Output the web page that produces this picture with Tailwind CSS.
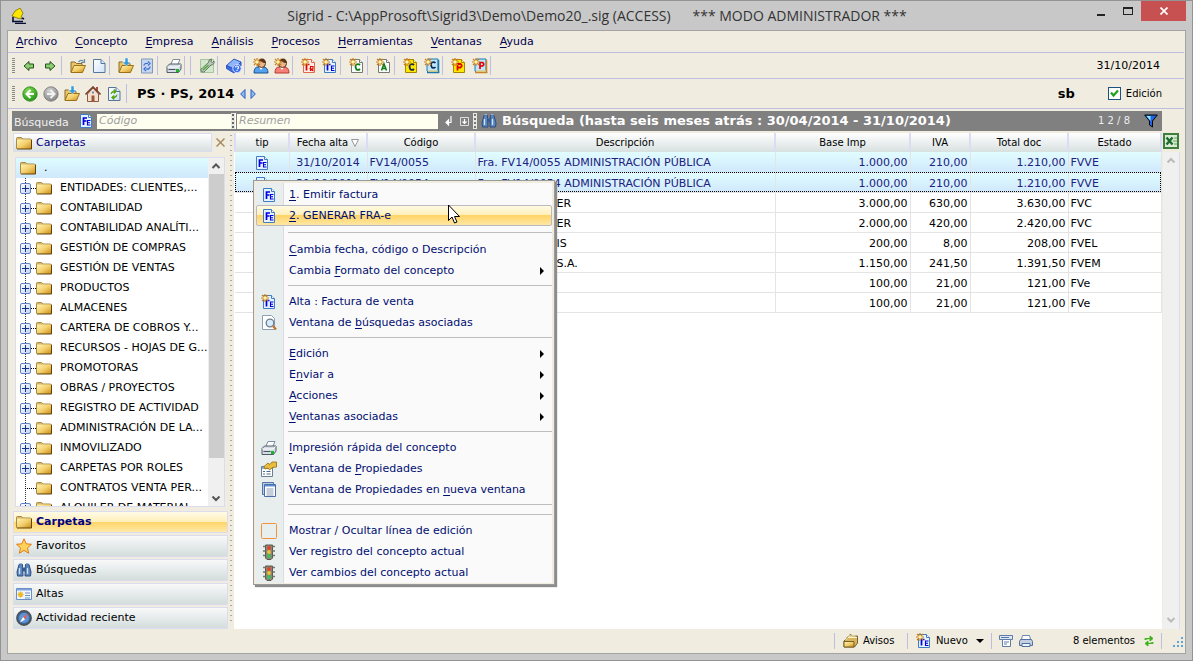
<!DOCTYPE html>
<html lang="es">
<head>
<meta charset="utf-8">
<title>Sigrid</title>
<script src="https://cdn.jsdelivr.net/npm/@tailwindcss/browser@4"></script>
</head>
<body class="h-screen overflow-hidden font-['DejaVu_Sans',sans-serif] text-[11px] leading-4 text-black">

<svg class="absolute size-0" aria-hidden="true">
  <defs>
    <linearGradient id="gold" x1="0" y1="0" x2="1" y2="1"><stop offset="0" stop-color="#fff3b0"/><stop offset=".5" stop-color="#f3cf6c"/><stop offset="1" stop-color="#c98a12"/></linearGradient>
    <linearGradient id="sheet" x1="0" y1="0" x2="1" y2="1"><stop offset="0" stop-color="#fff"/><stop offset="1" stop-color="#cfe2f8"/></linearGradient>
    <radialGradient id="greenBall" cx=".4" cy=".3" r=".8"><stop offset="0" stop-color="#8be05a"/><stop offset="1" stop-color="#128a0c"/></radialGradient>
    <radialGradient id="grayBall" cx=".4" cy=".3" r=".8"><stop offset="0" stop-color="#d4d4d4"/><stop offset="1" stop-color="#7b7b7b"/></radialGradient>
  </defs>
  <symbol id="folder" viewBox="0 0 16 16"><path d="M.5 3.5q0-1 1-1h4l1.500 1.500h7.500v9.500H.5z" fill="#d9b768" stroke="#a88a4a"/><path d="M1 4.500h14.500v9.500H1z" fill="url(#gold)"/><path d="M15.500 4.500V14H1" fill="none" stroke="#5e430f"/></symbol>
  <symbol id="openFolder" viewBox="0 0 16 16"><path d="M1 14V4h4l1.500 1.500H12V8" fill="#e9c66a" stroke="#8b6b2a"/><path d="M1 14.500 4 7.500h11.500L12.500 14.500z" fill="url(#gold)" stroke="#9a7018"/></symbol>
  <symbol id="folderOut" viewBox="0 0 16 16"><use href="#openFolder"/><path d="M8.500 4q2.500-3 5-.5M14.500 1v3.500H11" fill="none" stroke="#6f8fae" stroke-width="1.200"/></symbol>
  <symbol id="folderIn" viewBox="0 0 16 16"><use href="#openFolder"/><path d="M7 0h3v4h2.500L8.500 8 4.500 4H7z" fill="#2f9be0" stroke="#fff" stroke-width=".5"/></symbol>
  <symbol id="page" viewBox="0 0 16 16"><path d="M2.500 1.500h7.500l4 4v9H2.500z" fill="url(#sheet)" stroke="#56779d"/><path d="M10 1.500v4h4" fill="#dbe9f9" stroke="#56779d"/></symbol>
  <symbol id="pageSync" viewBox="0 0 16 16"><path d="M2.500 1h11v14h-11z" fill="#c6d6ee" stroke="#8197b8"/><path d="M5 7.500q0-2.500 4-2M9 3.500l2 2-2 2M11 8.500q0 3-4 2.500M7 13l-2-2 2-2" fill="none" stroke="#3f6dd0" stroke-width="1.200"/></symbol>
  <symbol id="pageRenew" viewBox="0 0 16 16"><use href="#page"/><path d="M5 8q0-3 3.500-2.500M8 3.500l2.500 2-2.500 2zM11 8.500q0 3.500-3.500 3M8 13.500l-2.500-2 2.500-2z" fill="#59a60e" stroke="#59a60e"/></symbol>
  <symbol id="printer" viewBox="0 0 16 16"><path d="M5 6 7 1.500h7L12 6" fill="#fff" stroke="#7d8da0"/><path d="M1 8.500 3.500 6H15v5l-2.500 3.500H1z" fill="#d5dbe2" stroke="#4f5c6b"/><path d="M1.500 9H12l2.500-2.500" fill="none" stroke="#fff"/><path d="M2.500 11.500h7" stroke="#49525e"/><path d="M10 11h3v3h-3z" fill="#18b52c"/></symbol>
  <symbol id="wrench" viewBox="0 0 16 16"><path d="M1.500 1.500h13v13h-13z" fill="#d3e6ce" stroke="#a8c3a1"/><path d="M2.500 13.500q-2-2.500 1-3.500l6-5.500q0-3.500 3-3.500l-.5 2.500 1.500 1 1.500-1.500q1 3.500-3 4L6.500 12.500q-1.500 3-4 1z" fill="#b9c7b8" stroke="#5f7b5c"/><path d="m4 12 5.500-5" stroke="#4fae3a" stroke-width="1.500"/></symbol>
  <symbol id="helpBook" viewBox="0 0 16 16"><path d="M.5 7.500 8 1l7 3-7 7z" fill="#8fb4fa" stroke="#2c55c0"/><path d="M.5 7.500v3L8 15l7-7V4l-7 7z" fill="#3d6be0" stroke="#2c55c0"/><circle cx="11" cy="10.500" r="4.200" fill="#3f70ee" stroke="#cfe0ff"/><path d="M9.500 9.500q0-1.500 1.500-1.500t1.500 1.500-1.500 1.500M11 12v1" fill="none" stroke="#fff" stroke-width="1.200"/></symbol>
  <symbol id="spark" viewBox="0 0 16 16"><path d="M4 0v8M0 4h8M1 1l6 6M7 1 1 7" stroke="#c87c1a" stroke-width="1.200"/><circle cx="4" cy="4" r="1.800" fill="#fff6b0"/></symbol>
  <symbol id="userBlue" viewBox="0 0 16 16"><path d="M1 15q0-6 4-6h5q5 0 5 6z" fill="#57a2f0" stroke="#19508e"/><path d="M6 9h4l-2 3z" fill="#fff"/><circle cx="8.500" cy="5.500" r="4" fill="#e9b487" stroke="#5d3519"/><path d="M4.500 4q1-3.500 4.500-3.500T13 5q-4 0-5-2z" fill="#5d3519"/><use href="#spark"/></symbol>
  <symbol id="userRed" viewBox="0 0 16 16"><path d="M1 15q0-6 4-6h5q5 0 5 6z" fill="#f58078" stroke="#b83830"/><path d="M6 9h4l-2 3z" fill="#fff"/><circle cx="8.500" cy="5.500" r="4" fill="#e9b487" stroke="#5d3519"/><path d="M4.500 4q1-3.500 4.500-3.500T13 5q-4 0-5-2z" fill="#5d3519"/><use href="#spark"/></symbol>
  <symbol id="pageFE" viewBox="0 0 16 16"><path d="M2.500 1.500h8l3 3v10h-11z" fill="#e6f2ff" stroke="#3f7ec0"/><path d="M10.500 1.500v3h3" fill="#fff" stroke="#3f7ec0"/><path d="M5.500 12V5h3.500M5.500 8h3" fill="none" stroke="#0000e0" stroke-width="1.700"/><path d="M12.500 7.500H9.500V12h3M9.500 9.800h2.500" fill="none" stroke="#0000e0" stroke-width="1.100"/></symbol>
  <symbol id="newFE" viewBox="0 0 16 16"><path d="M2.500 1.500h8l3 3v10h-11z" fill="#e6f2ff" stroke="#3f7ec0"/><path d="M10.500 1.500v3h3" fill="#fff" stroke="#3f7ec0"/><path d="M5.500 12.500V6.500h3" fill="none" stroke="#0000e0" stroke-width="1.700"/><path d="M12.500 8H9.500v4.500h3M9.500 10.300h2.500" fill="none" stroke="#0000e0" stroke-width="1.100"/><use href="#spark"/></symbol>
  <symbol id="newFR" viewBox="0 0 16 16"><path d="M2.500 1.500h8l3 3v10h-11z" fill="#ffece6" stroke="#e06a50"/><path d="M10.500 1.500v3h3" fill="#fff" stroke="#e06a50"/><path d="M5.500 12.500V6.500h3" fill="none" stroke="#e00000" stroke-width="1.700"/><path d="M9.500 13V8.500h2.500V11H9.500l3 2" fill="none" stroke="#e00000" stroke-width="1.100"/><use href="#spark"/></symbol>
  <symbol id="newC" viewBox="0 0 16 16"><path d="M2.500 1.500h8l3 3v10h-11z" fill="#fafdfa" stroke="#777"/><path d="M10.500 1.500v3h3" fill="#fff" stroke="#777"/><path d="M11 7Q9.500 5.500 7.500 6.500t0 5q2 1 3.500-.5" fill="none" stroke="#0b7d1b" stroke-width="1.800"/><use href="#spark"/></symbol>
  <symbol id="newA" viewBox="0 0 16 16"><path d="M2.500 1.500h8l3 3v10h-11z" fill="#fafdfa" stroke="#777"/><path d="M10.500 1.500v3h3" fill="#fff" stroke="#777"/><path d="M5.500 12.500 8 6l2.500 6.500M6.500 10.500h3" fill="none" stroke="#0b7d1b" stroke-width="1.600"/><use href="#spark"/></symbol>
  <symbol id="newCY" viewBox="0 0 16 16"><path d="M2.500 1.500h8l3 3v10h-11z" fill="#ffe800" stroke="#a98500"/><path d="M10.500 1.500v3h3" fill="#fff8b0" stroke="#a98500"/><path d="M11 7Q9.500 5.500 7.500 6.500t0 5q2 1 3.500-.5" fill="none" stroke="#1c2a4a" stroke-width="1.800"/><use href="#spark"/></symbol>
  <symbol id="newPY" viewBox="0 0 16 16"><path d="M2.500 1.500h8l3 3v10h-11z" fill="#ffe800" stroke="#a98500"/><path d="M10.500 1.500v3h3" fill="#fff8b0" stroke="#a98500"/><path d="M6.500 12.500V6h3q2.500 1.800 0 3.500h-3" fill="none" stroke="#e00000" stroke-width="1.800"/><use href="#spark"/></symbol>
  <symbol id="bookC" viewBox="0 0 16 16"><path d="M3 2.500 5 1h9v11l1 2.500H4.500L3 13z" fill="#bfe6fa" stroke="#1a78ae"/><path d="M14.500 2v12.500H3" fill="none" stroke="#1a78ae" stroke-width="1.500"/><path d="M4 13h10" stroke="#f2c24a"/><path d="M11.500 5Q10 3.500 8 4.500t0 5q2 1 3.500-.5" fill="none" stroke="#0f2d50" stroke-width="1.700"/><use href="#spark"/></symbol>
  <symbol id="bookP" viewBox="0 0 16 16"><path d="M3 2.500 5 1h9v11l1 2.500H4.500L3 13z" fill="#bfe6fa" stroke="#1a78ae"/><path d="M14.500 2v12.500H3" fill="none" stroke="#c8842a" stroke-width="1.500"/><path d="M4 13h10" stroke="#f2c24a"/><path d="M8 11V4.500h2.500q2.500 1.500 0 3.500H8" fill="none" stroke="#e00000" stroke-width="1.700"/><use href="#spark"/></symbol>
  <symbol id="arrowL" viewBox="0 0 16 16"><path d="M3 8 8 3.500v2.500h4.500v4H8v2.500z" fill="#8ccf72" stroke="#24501c"/></symbol>
  <symbol id="arrowR" viewBox="0 0 16 16"><path d="M13 8 8 3.500v2.500H3.500v4H8v2.500z" fill="#8ccf72" stroke="#24501c"/></symbol>
  <symbol id="ballL" viewBox="0 0 16 16"><circle cx="8" cy="8" r="7.200" fill="url(#greenBall)" stroke="#2c8a1d" stroke-width=".8"/><path d="M8.500 4 4.500 8l4 4M5 8h7" fill="none" stroke="#fff" stroke-width="2"/></symbol>
  <symbol id="ballR" viewBox="0 0 16 16"><circle cx="8" cy="8" r="7.200" fill="url(#grayBall)" stroke="#777" stroke-width=".8"/><path d="m7.500 4 4 4-4 4M11 8H4" fill="none" stroke="#f2f2f2" stroke-width="2"/></symbol>
  <symbol id="home" viewBox="0 0 16 16"><path d="M11 1h2v5h-2z" fill="#a55340"/><path d="M2.500 8v7.500h11V8L8 2z" fill="#f7dfcf" stroke="#8b5b44"/><path d="M.5 8.500 8 1l7.500 7.500" fill="none" stroke="#77422f" stroke-width="1.600"/><path d="M6.500 9.500h3v6h-3z" fill="#9b5a33"/><path d="M7 5.500h2v2H7z" fill="#6b90b8"/></symbol>
  <symbol id="star" viewBox="0 0 16 16"><path d="m8 .8 2.200 5 5.300.5-4 3.600 1.200 5.300L8 12.400l-4.700 2.800 1.200-5.300-4-3.600 5.300-.5z" fill="#ffd25a" stroke="#e07b1c"/></symbol>
  <symbol id="binoc" viewBox="0 0 16 16"><path d="M3 2.500h3.500v3L7 14H1.500L1 10zM9.500 2.500H13l2 7.500-.5 4H9z" fill="#5b85bd" stroke="#2c4d80"/><path d="M6.500 5.500h3v4h-3z" fill="#365d96"/><path d="M3.500 1h2.500v1.500H3.500zM10 1h2.500v1.500H10z" fill="#8fb2da"/><path d="M3.500 6v6M11.500 6v6" stroke="#cfe2f7" stroke-width="1.300"/></symbol>
  <symbol id="card" viewBox="0 0 16 16"><path d="M.5 2.500h15v11H.5z" fill="#eef5ff" stroke="#6a8fc4"/><path d="M1 3h14v1.500H1z" fill="#7fa5da"/><path d="M4.500 5.500v6M1.500 8.500h6M2.500 6.500l4 4M6.500 6.500l-4 4" stroke="#eebb22" stroke-width="1.300"/><path d="M9 7h5M9 9.500h5M9 12h5" stroke="#7291ba"/></symbol>
  <symbol id="compass" viewBox="0 0 16 16"><circle cx="8" cy="8" r="7" fill="#3c6ea8" stroke="#4c5258" stroke-width="1.800"/><circle cx="8" cy="8" r="5" fill="#5b95d8"/><path d="m12 3.500-3 6L7 7z" fill="#f25b4a"/><path d="m4 12.500 3-5.500 2 2.500z" fill="#fff"/></symbol>
  <symbol id="pageFind" viewBox="0 0 16 16"><path d="M1.500.5h9l3 3v11h-12z" fill="#fff" stroke="#8c9fb5"/><circle cx="9" cy="8" r="3.800" fill="#d6ebfb" stroke="#6b7b8c" stroke-width="1.300"/><path d="m12 11 3 3.500" stroke="#c27328" stroke-width="2.200"/></symbol>
  <symbol id="props" viewBox="0 0 16 16"><path d="M.5 5.500h11v10H.5z" fill="#fff" stroke="#6a7e96"/><path d="M1 6h10v2H1z" fill="#8cabd5"/><path d="M2 10.500h2M5.500 10.500h4M2 13h2M5.500 13h4" stroke="#48688e"/><path d="M3 5.500 7 2l2 1.500L11 1h4.500v5l-4 .5-3 2.500-1.500-2-3 1z" fill="#e9bd3b" stroke="#8f6d13" stroke-width=".8"/></symbol>
  <symbol id="windows" viewBox="0 0 16 16"><path d="M1.500.5h11v12h-11z" fill="#b9cbe4" stroke="#5275aa"/><path d="M3.500 2.500h11v12h-11z" fill="#fff" stroke="#4a6da6"/><path d="M4 3h10v1.500H4z" fill="#5f8ed1"/><path d="M5.500 7h7M5.500 9h7M5.500 11h7M5.500 13h7" stroke="#8b9cb5"/></symbol>
  <symbol id="traffic" viewBox="0 0 16 16"><path d="M4.500 1h7v13L10 15.500H6L4.500 14z" fill="#8d8674" stroke="#5c574b"/><path d="M2 2.500h2.500M2 7h2.500M2 11.500h2.500M11.500 2.500H14M11.500 7H14M11.500 11.500H14" stroke="#6f7a70" stroke-width="1.500"/><circle cx="8" cy="4" r="1.900" fill="#e8402c"/><circle cx="8" cy="8" r="1.900" fill="#f2c22e"/><circle cx="8" cy="12" r="1.900" fill="#37c45c"/></symbol>
  <symbol id="cards" viewBox="0 0 16 16"><path d="M3 6 6 2.500l2-1 1 1.500h5.500V10l-3 4H1V8z" fill="#d9b45c" stroke="#77602a"/><path d="M1 8.500h10v5.500H1z" fill="url(#gold)" stroke="#77602a"/><path d="M2.500 7 5 4.500h9M4.500 3h8" fill="none" stroke="#fff6cf"/></symbol>
  <symbol id="printDoc" viewBox="0 0 16 16"><path d="M1.500 2.500h13v4h-13z" fill="#dce6f4" stroke="#5d7da8"/><path d="M4.500 6.500h8v7h-8z" fill="#fff" stroke="#5d7da8"/><path d="M6 9h5M6 11h3M3 4.500h8" stroke="#5d7da8"/></symbol>
  <symbol id="printSm" viewBox="0 0 16 16"><path d="M4.500 2.500h7l1 4h-9z" fill="#fff" stroke="#6b86b0"/><path d="M2.500 6.500h11l1 2v4h-13v-4z" fill="#c4cfdf" stroke="#52709b"/><path d="M4 10.500h8v3H4z" fill="#e9f4ff" stroke="#52709b"/></symbol>
  <symbol id="sync" viewBox="0 0 12 12"><path d="M2 5V3.500h6M7 1l3 2.500L7 6zM10 7v1.500H4M5 6 2 8.500 5 11z" fill="#3fb11c" stroke="#3fb11c"/></symbol>
</svg>

<div class="relative flex h-full flex-col border border-[#939393] bg-[#c8c8c8] px-[6px] pb-[6px]">

  <header class="flex h-[29px] shrink-0 items-center">
    <svg class="ml-1 size-4 shrink-0" viewBox="0 0 16 16"><path d="M9 0Q3 2 1 8l5 2 5 1-1-2 2-4z" fill="#ffe600" stroke="#6b6000" stroke-width=".7"/><path d="M2 9v4M1 13.500h11M4 15.500h11M11 10l2 1" stroke="#0b1030" stroke-width="1.600"/></svg>
    <h1 class="flex-1 whitespace-pre pl-20 text-center font-['Open_Sans',sans-serif] text-sm text-[#333]">Sigrid - C:\AppProsoft\Sigrid3\Demo\Demo20_.sig (ACCESS)      *** MODO ADMINISTRADOR ***</h1>
    <div class="flex h-full shrink-0 items-start">
      <button aria-label="Minimizar" class="flex h-5 w-[27px] items-end justify-center pb-[5px]"><span class="h-[2px] w-2 bg-[#222]"></span></button>
      <button aria-label="Maximizar" class="flex h-5 w-[27px] items-center justify-center"><span class="h-2 w-[10px] border border-t-2 border-[#222]"></span></button>
      <button aria-label="Cerrar" class="flex h-5 w-[45px] items-center justify-center bg-[#c75050]"><svg class="size-2" viewBox="0 0 8 8"><path d="m.5.5 7 7M7.500.5l-7 7" stroke="#fff" stroke-width="1.700"/></svg></button>
    </div>
  </header>

  <div class="flex min-h-0 flex-1 flex-col border border-[#a3a3a3] bg-[#f0ede0]">

    <nav class="mr-px flex h-[22px] shrink-0 items-center gap-[18px] border-b border-[#bebee2] pl-2 text-[#000050] [&_u]:underline-offset-2">
      <button><u>A</u>rchivo</button><button><u>C</u>oncepto</button><button><u>E</u>mpresa</button><button><u>A</u>nálisis</button><button><u>P</u>rocesos</button><button><u>H</u>erramientas</button><button><u>V</u>entanas</button><button><u>A</u>yuda</button>
    </nav>

    <div class="mr-px flex h-[26px] shrink-0 items-center border-b border-[#bebee2] pl-1 pr-6 [&>button]:flex [&>button]:w-[21px] [&>button]:justify-center [&>i]:mr-[5px] [&>i]:h-[19px] [&>i]:w-px [&>i]:bg-[#bebee2] [&_svg]:size-4">
      <span class="mr-[3px] h-4 w-[3px] bg-[repeating-linear-gradient(#8a8a84_0_1px,#f0ede0_1px_2px)]"></span>
      <button aria-label="Atrás"><svg><use href="#arrowL"/></svg></button>
      <button aria-label="Adelante"><svg><use href="#arrowR"/></svg></button>
      <i class="ml-px"></i>
      <button aria-label="Abrir"><svg><use href="#folderOut"/></svg></button>
      <button aria-label="Documento"><svg><use href="#page"/></svg></button>
      <i></i>
      <button aria-label="Importar"><svg><use href="#folderIn"/></svg></button>
      <button aria-label="Refrescar"><svg><use href="#pageSync"/></svg></button>
      <i></i>
      <button aria-label="Imprimir"><svg><use href="#printer"/></svg></button>
      <i></i><i></i>
      <button aria-label="Configurar"><svg><use href="#wrench"/></svg></button>
      <i></i>
      <button aria-label="Ayuda"><svg><use href="#helpBook"/></svg></button>
      <i></i>
      <button aria-label="Cliente"><svg><use href="#userBlue"/></svg></button>
      <button aria-label="Proveedor"><svg><use href="#userRed"/></svg></button>
      <i></i>
      <button aria-label="Factura recibida"><svg><use href="#newFR"/></svg></button>
      <button aria-label="Factura emitida"><svg><use href="#newFE"/></svg></button>
      <i></i>
      <button aria-label="Contrato"><svg><use href="#newC"/></svg></button>
      <i></i>
      <button aria-label="Albarán"><svg><use href="#newA"/></svg></button>
      <i></i>
      <button aria-label="Cobro"><svg><use href="#newCY"/></svg></button>
      <button aria-label="Cartera de cobros"><svg><use href="#bookC"/></svg></button>
      <i></i>
      <button aria-label="Pago"><svg><use href="#newPY"/></svg></button>
      <button aria-label="Cartera de pagos"><svg><use href="#bookP"/></svg></button>
      <i></i>
      <span class="ml-auto">31/10/2014</span>
    </div>

    <div class="mr-px flex h-[30px] shrink-0 items-center border-b border-[#bebee2] pl-1 pr-[22px] [&>button]:flex [&>button]:w-[21px] [&>button]:justify-center [&>button>svg]:size-4">
      <span class="mr-1 h-4 w-[3px] bg-[repeating-linear-gradient(#8a8a84_0_1px,#f0ede0_1px_2px)]"></span>
      <button aria-label="Anterior"><svg><use href="#ballL"/></svg></button>
      <button aria-label="Siguiente"><svg><use href="#ballR"/></svg></button>
      <button aria-label="Carpeta"><svg><use href="#folderIn"/></svg></button>
      <button aria-label="Inicio"><svg><use href="#home"/></svg></button>
      <button aria-label="Actualizar"><svg><use href="#pageRenew"/></svg></button>
      <i class="ml-[2px] mr-[10px] h-[19px] w-px bg-[#bebee2]"></i>
      <strong class="text-[13px]">PS · PS, 2014</strong>
      <svg class="ml-[6px] h-[10px] w-4" viewBox="0 0 16 10"><path d="M5 .5v9L.7 5zM11 .5v9L15.300 5z" fill="#8cbcf5" stroke="#2a5bc0"/></svg>
      <strong class="ml-auto mr-[33px] text-[13px]">sb</strong>
      <label class="flex items-center gap-[5px] text-[10px]"><span class="grid"><input type="checkbox" checked class="size-[13px] appearance-none border border-[#1c5180] bg-white [grid-area:1/1]"><svg class="pointer-events-none size-[13px] [grid-area:1/1]" viewBox="0 0 13 13"><path d="m3 5.500 2.500 3L10 3.500" fill="none" stroke="#21a121" stroke-width="2.200"/></svg></span>Edición</label>
    </div>

    <div class="flex min-h-0 flex-1 flex-col pl-1">
      <div class="mr-[23px] mt-[2px] flex h-5 shrink-0 items-center bg-[#808080] text-white">
        <label for="codigo" class="w-[66px] pl-[2px] pt-1 text-[#f0f0f0]">Búsqueda</label>
        <svg class="mr-[3px] size-4"><use href="#pageFE"/></svg>
        <input id="codigo" placeholder="Código" class="h-[15px] w-[134px] bg-[#fffff0] px-[2px] italic outline-none placeholder:text-[#a0a0a0]">
        <span class="mr-px h-4 w-[5px] border-r border-white bg-[radial-gradient(circle,#666_1px,#e8e8e0_1px)] bg-[length:4px_4px]"></span>
        <input id="resumen" aria-label="Resumen" placeholder="Resumen" class="h-[15px] w-[201px] bg-[#fffff0] px-[2px] italic outline-none placeholder:text-[#a0a0a0]">
        <svg class="ml-[6px] h-[10px] w-2" viewBox="0 0 8 10"><path d="M7 0v6.500H2M4.500 4 2 6.500 4.500 9z" fill="none" stroke="#fff" stroke-width="1.200"/></svg>
        <svg class="ml-2 size-[9px]" viewBox="0 0 9 9"><path d="M.5.500h8v8h-8z" fill="none" stroke="#ddd"/><path d="M4.500 2v4M2.500 4.500l2 2 2-2" fill="none" stroke="#fff" stroke-width="1.200"/></svg>
        <span class="ml-1 h-4 w-1 bg-[radial-gradient(circle,#777_1px,#e8e8e0_1px)] bg-[length:4px_4px]"></span>
        <svg class="ml-1 size-4"><use href="#binoc"/></svg>
        <strong class="ml-[5px] whitespace-nowrap text-[13px]">Búsqueda (hasta seis meses atrás : 30/04/2014 - 31/10/2014)</strong>
        <span class="ml-auto mr-[14px] text-[10px] text-[#eee]">1 2 / 8</span>
        <svg class="mr-1 size-[14px]" viewBox="0 0 14 14"><path d="M.7 1h12.600L8.500 7v6l-3-2V7z" fill="#2563e8" stroke="#000"/><path d="m2.500 2 4 5V2z" fill="#7ff0ff"/></svg>
      </div>

      <div class="flex min-h-0 flex-1">
        <aside class="flex w-[216px] shrink-0 flex-col pl-px pt-[2px]">
          <div class="flex h-[19px] shrink-0 items-center">
            <h2 class="flex h-[19px] w-[199px] items-center gap-1 border border-[#dcdcf0] bg-linear-to-b from-white to-[#d8e0e0] pl-[2px] text-[#000080]"><svg class="size-4"><use href="#folder"/></svg>Carpetas</h2>
            <button aria-label="Cerrar panel" class="ml-1"><svg class="size-[9px]" viewBox="0 0 9 9"><path d="m.5.500 8 8M8.500.5l-8 8" stroke="#a98a5c" stroke-width="1.500"/></svg></button>
          </div>
          <div class="mb-1 ml-[2px] mr-[3px] mt-[5px] flex min-h-0 flex-1 overflow-hidden border border-[#dcdcf0] bg-white">
            <ul class="min-w-0 flex-1 overflow-hidden text-[11px] [&>li]:flex [&>li]:h-5 [&>li]:items-center [&>li]:whitespace-nowrap [&>li]:bg-no-repeat [&>li]:pl-1 [&>li:nth-child(n+2)]:bg-[repeating-linear-gradient(#333_0_1px,transparent_1px_2px)] [&>li:nth-child(n+2)]:bg-[length:1px_100%] [&>li:nth-child(n+2)]:bg-[position:9px_0] [&_b]:flex [&_b]:size-[11px] [&_b]:shrink-0 [&_b]:items-center [&_b]:justify-center [&_b]:rounded-[2px] [&_b]:border [&_b]:border-[#5d80c8] [&_b]:bg-linear-to-br [&_b]:from-white [&_b]:to-[#c8d4f0] [&_i]:w-[5px] [&_i]:border-t [&_i]:border-dotted [&_i]:border-black [&_b>svg]:size-[7px] [&>li>svg]:mr-2 [&>li>svg]:size-4 [&>li>svg]:shrink-0">
              <li class="bg-linear-to-b from-[#defcff] to-[#cfe8fc]"><svg><use href="#folder"/></svg>.</li>
              <li><b><svg viewBox="0 0 7 7"><path d="M3.500 0v7M0 3.500h7" stroke="#103090"/></svg></b><i></i><svg><use href="#folder"/></svg>ENTIDADES: CLIENTES,...</li>
              <li><b><svg viewBox="0 0 7 7"><path d="M3.500 0v7M0 3.500h7" stroke="#103090"/></svg></b><i></i><svg><use href="#folder"/></svg>CONTABILIDAD</li>
              <li><b><svg viewBox="0 0 7 7"><path d="M3.500 0v7M0 3.500h7" stroke="#103090"/></svg></b><i></i><svg><use href="#folder"/></svg>CONTABILIDAD ANALÍTI...</li>
              <li><b><svg viewBox="0 0 7 7"><path d="M3.500 0v7M0 3.500h7" stroke="#103090"/></svg></b><i></i><svg><use href="#folder"/></svg>GESTIÓN DE COMPRAS</li>
              <li><b><svg viewBox="0 0 7 7"><path d="M3.500 0v7M0 3.500h7" stroke="#103090"/></svg></b><i></i><svg><use href="#folder"/></svg>GESTIÓN DE VENTAS</li>
              <li><b><svg viewBox="0 0 7 7"><path d="M3.500 0v7M0 3.500h7" stroke="#103090"/></svg></b><i></i><svg><use href="#folder"/></svg>PRODUCTOS</li>
              <li><b><svg viewBox="0 0 7 7"><path d="M3.500 0v7M0 3.500h7" stroke="#103090"/></svg></b><i></i><svg><use href="#folder"/></svg>ALMACENES</li>
              <li><b><svg viewBox="0 0 7 7"><path d="M3.500 0v7M0 3.500h7" stroke="#103090"/></svg></b><i></i><svg><use href="#folder"/></svg>CARTERA DE COBROS Y...</li>
              <li><b><svg viewBox="0 0 7 7"><path d="M3.500 0v7M0 3.500h7" stroke="#103090"/></svg></b><i></i><svg><use href="#folder"/></svg>RECURSOS - HOJAS DE G...</li>
              <li><b><svg viewBox="0 0 7 7"><path d="M3.500 0v7M0 3.500h7" stroke="#103090"/></svg></b><i></i><svg><use href="#folder"/></svg>PROMOTORAS</li>
              <li><b><svg viewBox="0 0 7 7"><path d="M3.500 0v7M0 3.500h7" stroke="#103090"/></svg></b><i></i><svg><use href="#folder"/></svg>OBRAS / PROYECTOS</li>
              <li><b><svg viewBox="0 0 7 7"><path d="M3.500 0v7M0 3.500h7" stroke="#103090"/></svg></b><i></i><svg><use href="#folder"/></svg>REGISTRO DE ACTIVIDAD</li>
              <li><b><svg viewBox="0 0 7 7"><path d="M3.500 0v7M0 3.500h7" stroke="#103090"/></svg></b><i></i><svg><use href="#folder"/></svg>ADMINISTRACIÓN DE LA...</li>
              <li><b><svg viewBox="0 0 7 7"><path d="M3.500 0v7M0 3.500h7" stroke="#103090"/></svg></b><i></i><svg><use href="#folder"/></svg>INMOVILIZADO</li>
              <li><b><svg viewBox="0 0 7 7"><path d="M3.500 0v7M0 3.500h7" stroke="#103090"/></svg></b><i></i><svg><use href="#folder"/></svg>CARPETAS POR ROLES</li>
              <li><i class="ml-[5px] w-[11px]!"></i><svg><use href="#folder"/></svg>CONTRATOS VENTA PER...</li>
              <li><b><svg viewBox="0 0 7 7"><path d="M3.500 0v7M0 3.500h7" stroke="#103090"/></svg></b><i></i><svg><use href="#folder"/></svg>ALQUILER DE MATERIAL</li>
            </ul>
            <div class="flex w-4 shrink-0 flex-col items-center bg-[#f0f0f0]">
              <svg class="h-4 w-4 shrink-0" viewBox="0 0 16 16"><path d="m4.500 10 3.500-3.500L11.500 10" fill="none" stroke="#555" stroke-width="2"/></svg>
              <span class="min-h-0 w-[15px] flex-1 bg-[#cdcdcd]"></span>
              <span class="h-8 shrink-0"></span>
              <svg class="h-4 w-4 shrink-0" viewBox="0 0 16 16"><path d="m4.500 6.500 3.500 3.500 3.500-3.500" fill="none" stroke="#555" stroke-width="2"/></svg>
            </div>
          </div>
          <div class="flex shrink-0 flex-col gap-[2px] [&>button]:flex [&>button]:h-[22px] [&>button]:items-center [&>button]:gap-1 [&>button]:border [&>button]:border-[#dcdcf0] [&>button]:pl-[2px] [&_svg]:size-4">
            <button class="bg-[linear-gradient(#fffbe6,#ffefb8_50%,#ffd468_50%,#ffe9a8)] font-bold text-[#000080]"><svg><use href="#folder"/></svg>Carpetas</button>
            <button class="bg-linear-to-b from-[#f8f9f9] to-[#d4dddd]"><svg><use href="#star"/></svg>Favoritos</button>
            <button class="bg-linear-to-b from-[#f8f9f9] to-[#d4dddd]"><svg><use href="#binoc"/></svg>Búsquedas</button>
            <button class="bg-linear-to-b from-[#f8f9f9] to-[#d4dddd]"><svg><use href="#card"/></svg>Altas</button>
            <button class="bg-linear-to-b from-[#f8f9f9] to-[#d4dddd]"><svg><use href="#compass"/></svg>Actividad reciente</button>
          </div>
        </aside>

        <div class="mb-1 mt-[2px] w-[6px] shrink-0 bg-[radial-gradient(circle,#aaa9a0_1px,transparent_1px)] bg-[length:6px_5px]"></div>

        <main class="flex min-w-0 flex-1 pt-[2px]">
          <div class="min-w-0 flex-1 bg-white">
            <table class="w-full table-fixed border-collapse text-[11px] leading-4 [&_td]:h-5 [&_td]:whitespace-nowrap [&_td]:border-r [&_td]:border-b [&_td]:border-[#e4e4e4] [&_td]:px-[2px] [&_td]:pb-0 [&_td]:pt-[3px] [&_td]:align-top [&_th]:h-[19px] [&_th]:border-x-2 [&_th]:border-[#dcdcf4] [&_th]:p-0 [&_th]:text-center [&_th]:text-[10px] [&_th]:font-normal [&_th]:whitespace-nowrap">
              <colgroup><col class="w-[54px]"><col class="w-[78px]"><col class="w-[108px]"><col><col class="w-[135px]"><col class="w-[60px]"><col class="w-[98px]"><col class="w-[93px]"></colgroup>
              <thead><tr class="bg-linear-to-b from-white to-[#d8e0e0]"><th>tip</th><th>Fecha alta <svg class="inline size-2" viewBox="0 0 8 8"><path d="M.5.500h7L4 7.500z" fill="#fff" stroke="#999"/></svg></th><th>Código</th><th>Descripción</th><th>Base Imp</th><th>IVA</th><th>Total doc</th><th>Estado</th></tr></thead>
              <tbody class="[&_td:nth-child(5)]:text-right [&_td:nth-child(6)]:text-right [&_td:nth-child(7)]:text-right">
                <tr class="bg-linear-to-b from-[#e2fdff] to-[#cfe8fc] text-[#202080]"><td><svg class="mx-auto size-4"><use href="#pageFE"/></svg></td><td class="text-center">31/10/2014</td><td>FV14/0055</td><td>Fra. FV14/0055 ADMINISTRACIÓN PÚBLICA</td><td>1.000,00</td><td>210,00</td><td>1.210,00</td><td>FVVE</td></tr>
                <tr class="bg-linear-to-b from-[#e2fdff] to-[#cfe8fc] text-[#202080] outline-1 -outline-offset-1 outline-dotted outline-black"><td><svg class="mx-auto size-4"><use href="#pageFE"/></svg></td><td class="text-center">31/10/2014</td><td>FV14/0054</td><td>Fra. FV14/0054 ADMINISTRACIÓN PÚBLICA</td><td>1.000,00</td><td>210,00</td><td>1.210,00</td><td>FVVE</td></tr>
                <tr><td></td><td></td><td></td><td class="pl-[81px]!">ER</td><td>3.000,00</td><td>630,00</td><td>3.630,00</td><td>FVC</td></tr>
                <tr><td></td><td></td><td></td><td class="pl-[81px]!">ER</td><td>2.000,00</td><td>420,00</td><td>2.420,00</td><td>FVC</td></tr>
                <tr><td></td><td></td><td></td><td class="pl-[81px]!">IS</td><td>200,00</td><td>8,00</td><td>208,00</td><td>FVEL</td></tr>
                <tr><td></td><td></td><td></td><td class="pl-[81px]!">S.A.</td><td>1.150,00</td><td>241,50</td><td>1.391,50</td><td>FVEM</td></tr>
                <tr><td></td><td></td><td></td><td></td><td>100,00</td><td>21,00</td><td>121,00</td><td>FVe</td></tr>
                <tr><td></td><td></td><td></td><td></td><td>100,00</td><td>21,00</td><td>121,00</td><td>FVe</td></tr>
              </tbody>
            </table>
          </div>
          <div class="mr-[5px] flex w-[18px] shrink-0 flex-col pl-px">
            <button aria-label="Exportar a Excel" class="mb-[3px]"><svg class="size-4" viewBox="0 0 16 16"><path d="M1 1h14v14H1z" fill="#d9ecd3" stroke="#3f7d3c" stroke-width="2"/><path d="m3.500 4.500 6 7M9.500 4.500l-6 7" stroke="#1d6a2c" stroke-width="2.400"/><path d="M11 5h3M10 8h4M11 11h3" stroke="#5f9e5c"/></svg></button>
            <div class="flex flex-1 flex-col justify-between border-r border-[#dcdcf0] bg-[#f0f0f0]">
              <svg class="size-4" viewBox="0 0 16 16"><path d="m4.500 10.500 3.500-3.500 3.500 3.500" fill="none" stroke="#bbb" stroke-width="2"/></svg>
              <svg class="size-4" viewBox="0 0 16 16"><path d="m4.500 5 3.500 3.500L11.500 5" fill="none" stroke="#bbb" stroke-width="2"/></svg>
            </div>
          </div>
        </main>
      </div>
    </div>

    <footer class="flex h-6 shrink-0 items-center justify-end text-[10px] [&>i]:h-4 [&>i]:w-px [&>i]:bg-[#bebee2] [&_svg]:size-4">
      <i></i>
      <button class="flex w-[72px] items-center gap-1 pl-2"><svg><use href="#cards"/></svg>Avisos</button>
      <i></i>
      <button class="flex w-[83px] items-center gap-1 pl-2"><svg><use href="#newFE"/></svg>Nuevo<span class="ml-1 border-x-4 border-t-4 border-transparent border-t-black"></span></button>
      <i></i>
      <button aria-label="Imprimir documento" class="ml-[6px]"><svg><use href="#printDoc"/></svg></button>
      <button aria-label="Imprimir lista" class="ml-1"><svg><use href="#printSm"/></svg></button>
      <span class="ml-[39px] mr-2">8 elementos</span>
      <button aria-label="Recargar" class="mr-[6px]"><svg class="size-3!"><use href="#sync"/></svg></button>
      <i></i>
      <svg class="ml-[7px]" viewBox="0 0 16 16"><path d="M12 4h2v2h-2zM12 8h2v2h-2zM12 12h2v2h-2zM8 8h2v2H8zM8 12h2v2H8zM4 12h2v2H4z" fill="#5aa5dd"/></svg>
    </footer>
  </div>

  <div class="absolute left-[252px] top-[179px] w-[302px] border border-[#9a9a9a] bg-[#f0ede0] p-[2px] pb-px shadow-[2px_2px_1px_#8c8c8c]">
    <div class="flex flex-col bg-linear-to-r from-[#e8eeee] from-[27px] via-[#bebebe] via-[27px] to-[#fafafa] to-[28px] pt-px text-[#000e70] [&>button]:flex [&>button]:h-[21px] [&>button]:items-center [&>button]:px-1 [&>button]:text-left [&>button>span]:flex-1 [&>hr]:mb-[5px] [&>hr]:ml-8 [&>hr]:mt-1 [&>hr]:border-[#bebebe] [&_s]:mr-1 [&_s]:border-y-[4px] [&_s]:border-l-[4px] [&_s]:border-transparent [&_s]:border-l-black [&_svg]:ml-px [&_svg]:mr-3 [&_svg]:size-4 [&_u]:underline-offset-2">
      <button><svg><use href="#pageFE"/></svg><span><u>1</u>. Emitir factura</span></button>
      <button class="rounded-[2px] bg-[linear-gradient(#fffbe6,#ffefb8_50%,#ffd468_50%,#ffe9a8)] outline-1 -outline-offset-1 outline-[#b9b9c4]"><svg><use href="#pageFE"/></svg><span><u>2</u>. GENERAR FRA-e</span></button>
      <hr class="mb-[6px]! mt-[6px]!">
      <button class="pl-[33px]!"><span><u>C</u>ambia fecha, código o Descripción</span></button>
      <button class="pl-[33px]!"><span>Cambia <u>F</u>ormato del concepto</span><s></s></button>
      <hr>
      <button><svg><use href="#newFE"/></svg><span>Alta : Factura de venta</span></button>
      <button><svg><use href="#pageFind"/></svg><span>Ventana de <u>b</u>úsquedas asociadas</span></button>
      <hr>
      <button class="pl-[33px]!"><span><u>E</u>dición</span><s></s></button>
      <button class="pl-[33px]!"><span>E<u>n</u>viar a</span><s></s></button>
      <button class="pl-[33px]!"><span><u>A</u>cciones</span><s></s></button>
      <button class="pl-[33px]!"><span><u>V</u>entanas asociadas</span><s></s></button>
      <hr>
      <button><svg><use href="#printer"/></svg><span><u>I</u>mpresión rápida del concepto</span></button>
      <button><svg><use href="#props"/></svg><span>Ventana de <u>P</u>ropiedades</span></button>
      <button><svg><use href="#windows"/></svg><span>Ventana de Propiedades en <u>n</u>ueva ventana</span></button>
      <hr><hr>
      <button><svg viewBox="0 0 16 16"><rect x=".5" y=".5" width="15" height="15" rx="1" fill="none" stroke="#f0943c"/></svg><span>Mostrar / Ocultar línea de edición</span></button>
      <button><svg><use href="#traffic"/></svg><span>Ver registro del concepto actual</span></button>
      <button><svg><use href="#traffic"/></svg><span>Ver cambios del concepto actual</span></button>
    </div>
  </div>

  <svg class="absolute left-[447px] top-[203px] h-5 w-3" viewBox="0 0 12 20"><path d="M.5 1v15.500L4 13l2.500 6 2.500-1-2.500-5.500h5z" fill="#fff" stroke="#000"/></svg>
</div>
</body>
</html>
